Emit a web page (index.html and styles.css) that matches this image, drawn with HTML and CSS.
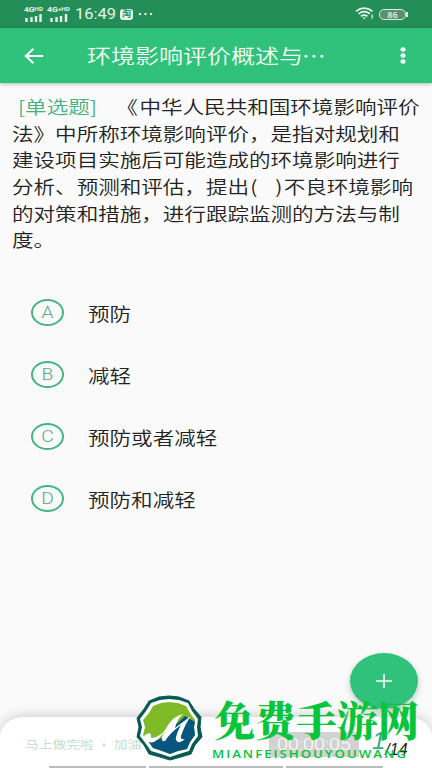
FILE: index.html
```html
<!DOCTYPE html>
<html lang="zh-CN">
<head>
<meta charset="utf-8">
<title>单选题</title>
<link rel="stylesheet" href="styles.css">
</head>
<body>
<div class="screen">
  <header class="status">
    <svg class="signal" width="50" height="18" viewBox="0 0 50 18">
      <g class="net"><text x="0" y="6.500" textLength="19" lengthAdjust="spacingAndGlyphs">4G<tspan class="hd" dy="-1">HD</tspan></text><text x="23" y="6.500" textLength="23" lengthAdjust="spacingAndGlyphs">4G<tspan class="hd" dy="-1">+HD</tspan></text></g>
      <path d="M2.5 13v4M7.500 12v5M12 11v6M16.500 9v8M27.500 13v4M32.500 12v5M37 11v6M42 9v8" stroke="#e4f5eb" stroke-width="2.400"/>
    </svg>
    <span class="clock">16:49</span>
    <span class="app-chip">淘</span>
    <svg class="more-dots" width="16" height="4" viewBox="0 0 16 4" fill="#d9f2e4"><circle cx="2" cy="2" r="1.200"/><circle cx="7.500" cy="2" r="1.200"/><circle cx="13" cy="2" r="1.200"/></svg>
    <svg class="wifi" width="20" height="13" viewBox="0 0 20 13" fill="none" stroke="#e4f7ec" stroke-width="1.700">
      <path d="M1 4.300Q9 -2 17.500 4.300M3.500 6.800Q9 2.500 15 6.800M6 9.200Q9 7 12.500 9.200"/><path d="M7.500 10.500h3.500l-1.700 1.700z" fill="#e4f7ec" stroke="none"/><path d="M17.200 7.500v4" stroke-width="1.300"/>
    </svg>
    <span class="battery">86</span>
  </header>
  <nav class="bar">
    <svg class="back" width="20" height="18" viewBox="0 0 20 18" fill="none" stroke="#fff" stroke-width="1.900"><path d="M19 9H2M9.500 1.700L1.700 9l7.800 7.300"/></svg>
    <h1 class="title wide">环境影响评价概述与<span class="ellipsis">⋯</span></h1>
    <svg class="menu" width="6" height="18" viewBox="0 0 6 18" fill="#fff"><ellipse cx="3" cy="2.500" rx="2.600" ry="2.200"/><ellipse cx="3" cy="8.500" rx="2.600" ry="2.200"/><ellipse cx="3" cy="14.500" rx="2.600" ry="2.200"/></svg>
  </nav>
  <main class="content">
    <div class="question">
      <p class="line wide"><span class="kind">[单选题]</span><span class="open">《</span>中华人民共和国环境影响评价</p>
      <p class="line wide">法》中所称环境影响评价，是指对规划和</p>
      <p class="line wide">建设项目实施后可能造成的环境影响进行</p>
      <p class="line wide">分析、预测和评估，提出<span class="blank">(</span><span>)</span>不良环境影响</p>
      <p class="line wide">的对策和措施，进行跟踪监测的方法与制</p>
      <p class="line wide">度。</p>
    </div>
    <ul class="options">
      <li class="option"><span class="letter"><b class="wide-c">A</b></span><span class="label wide">预防</span></li>
      <li class="option"><span class="letter"><b class="wide-c">B</b></span><span class="label wide">减轻</span></li>
      <li class="option"><span class="letter"><b class="wide-c">C</b></span><span class="label wide">预防或者减轻</span></li>
      <li class="option"><span class="letter"><b class="wide-c">D</b></span><span class="label wide">预防和减轻</span></li>
    </ul>
  </main>
  <button class="fab" aria-label="add"><svg width="18" height="16" viewBox="0 0 18 16" stroke="#fff" stroke-width="1.600"><path d="M9 1v14M1 8h16"/></svg></button>
  <footer class="sheet">
    <div class="sheet-row">
      <span class="cheer wide">马上做完啦 · 加油</span>
      <span class="timer"><b class="wide-c">00:00:05</b></span>
      <span class="count"><i class="current">1</i><i class="total">/14</i></span>
    </div>
    <div class="segments"><i></i><i></i><i></i></div>
  </footer>
  <div class="watermark">
    <svg width="68" height="66" viewBox="0 0 68 66">
      <path d="M24 2L34 1L44 2L54 6L59 14L66 22L65 32L67 42L60 50L56 59L46 62L35 65L25 62L14 59L9 50L2 42L4 32L2 23L9 14L14 6Z" fill="#075a51" stroke="#075a51" stroke-linejoin="round"/>
      <path d="M25 5L34 4L44 5L53 8L57 16L63 24L62 32L63 41L57 49L54 56L44 59L35 62L26 59L16 56L11 49L5 41L7 32L5 24L11 16L16 8Z" fill="#fff"/>
      <path d="M26 8L34 7L43 8L51 11L55 18L60 25L59 32L60 40L55 47L52 54L43 56L35 59L27 56L18 53L14 47L8 40L10 32L8 25L14 18L18 11Z" fill="#7fba27"/>
      <path d="M13 46Q25 47 32 38L50 21L60 27L59 32L60 40L55 47L52 54L43 56L35 59L27 56L18 53Z" fill="#07567d"/>
      <path d="M9 41Q13 37 16 39q-1 3 1 4Q27 42 33 30q6-9 15-11q-6 5-8 14l16-12Q50 29 46 41q-1 4 4 3q-6 6-9 1q-1-4 5-15q-10 7-16 16q-4 1-3-4q1-3 4-8Q21 50 14 47Q9 45 9 41Z" fill="#fff"/>
    </svg>
    <div class="brand"><span class="brand-cn">免费手游网</span><span class="brand-en">MIANFEISHOUYOUWANG</span></div>
  </div>
</div>
</body>
</html>
```
FILE: styles.css
```css
* { box-sizing: border-box; margin: 0; padding: 0; }
body { background: #fafafa; font-family: Roboto, "Noto Sans CJK SC", sans-serif; text-spacing-trim: space-all; }
.screen { position: relative; width: 432px; height: 768px; overflow: hidden; display: flex; flex-direction: column; }
.wide { transform: scaleX(1.197); transform-origin: left center; white-space: nowrap; }
.wide-c { display: block; transform: scaleX(1.2); font-weight: 300; }

.status { height: 28px; flex: none; display: flex; align-items: center; background: #248e58; padding-left: 24px; color: #e4f5eb; }
.signal { flex: none; margin-top: -1px; }
.net { font: 700 7.500px Roboto, sans-serif; fill: #e4f5eb; }
.hd { font-size: 5.500px; }
.clock { width: 45px; margin-left: 1px; font: 400 15px/18px Roboto, sans-serif; transform: scaleX(1.1); transform-origin: left center; }
.app-chip { width: 13px; height: 11px; border-radius: 3px; background: #e4f5eb; color: #248e58; font: 700 9px/10px "Noto Sans CJK SC", sans-serif; text-align: center; }
.more-dots { margin-left: 5px; }
.wifi { margin-left: auto; margin-top: -1px; }
.battery { position: relative; width: 27px; height: 11px; margin: 0 26px 0 4px; border: 1px solid #d4eee0; border-radius: 5px; background: #5b8d6f; font: 600 9px/9px "Open Sans", sans-serif; text-align: center; }
.battery::after { content: ""; position: absolute; right: -3px; top: 2px; width: 2px; height: 5px; background: #d4eee0; }

.bar { height: 55px; flex: none; display: flex; align-items: center; padding: 0 26px 0 24px; background: #30c17a; box-shadow: 0 1px 4px rgba(0,0,0,.28); color: #f4fff8; }
.title { margin-left: 43px; font: 400 20px/28px "Noto Sans CJK SC", sans-serif; font-weight: 350; transform: scaleX(1.2); }
.ellipsis { display: inline-block; transform: translateX(-1px); }
.menu { margin-left: auto; }

.content { flex: 1; }
.question { padding: 10px 0 0 12px; color: #222; }
.line { height: 26.700px; font: 400 18px/26.700px "Noto Sans CJK SC", sans-serif; font-weight: 350; }
.kind { display: inline-block; width: 88px; padding-left: 5px; color: #45b27e; }
.open { display: inline-block; margin: 0 1.500px 0 -1px; }
.blank { display: inline-block; width: 22px; padding-left: 1px; }
.blank + span { display: inline-block; width: 7px; }

.options { list-style: none; padding-top: 28px; }
.option { height: 62px; display: flex; align-items: center; padding-left: 31px; }
.letter { width: 33px; height: 27px; border: 2px solid #45b581; border-radius: 50%; font: 300 16px/23px Roboto, sans-serif; color: #55a985; text-align: center; }
.label { margin: 2px 0 0 24px; font: 400 18px/26px "Noto Sans CJK SC", sans-serif; font-weight: 350; color: #222; }

.fab { position: absolute; left: 350px; top: 653px; width: 68px; height: 56px; border: 0; border-radius: 50%; background: #30c17a; box-shadow: 0 3px 6px rgba(0,0,0,.22); display: flex; align-items: center; justify-content: center; }
.sheet { position: relative; height: 51px; flex: none; display: flex; flex-direction: column; background: #fff; border-radius: 24px 24px 0 0 / 20px 20px 0 0; box-shadow: 0 -2px 12px rgba(0,0,0,.17); }
.sheet-row { flex: 1; display: flex; align-items: center; padding: 5px 24px 0 25px; }
.cheer { width: 244px; font: 400 11.500px/18px "Noto Sans CJK SC", sans-serif; color: #c1ddd1; }
.timer { width: 90px; height: 25px; background: #d2d2d2; color: #fff; font: 300 17px/25px Roboto, sans-serif; text-align: center; }
.timer b { transform: scaleX(1.16); }
.count { display: flex; margin-left: 13px; }
.current { font: italic 400 24px/24px "Liberation Sans", sans-serif; color: #3ca887; }
.total { margin-top: 11px; font: italic 400 16px/20px "Liberation Sans", sans-serif; color: #222; }
.segments { display: flex; gap: 3px; height: 2px; padding-left: 49px; }
.segments i { background: #bbb; width: 97px; }
.segments i:nth-child(2) { width: 134px; }

.watermark { position: absolute; left: 135px; top: 695px; display: flex; }
.brand { display: flex; flex-direction: column; margin-left: 11px; color: #06c53b; }
.brand-cn { height: 52px; font: 900 41px/48px "Noto Serif CJK SC", "Noto Sans CJK SC", serif; white-space: nowrap; }
.brand-en { margin-left: -2px; font: 600 11px/14px "Open Sans", sans-serif; letter-spacing: 1.650px; white-space: nowrap; transform: scaleX(1.2); transform-origin: left; width: 160px; }
```
